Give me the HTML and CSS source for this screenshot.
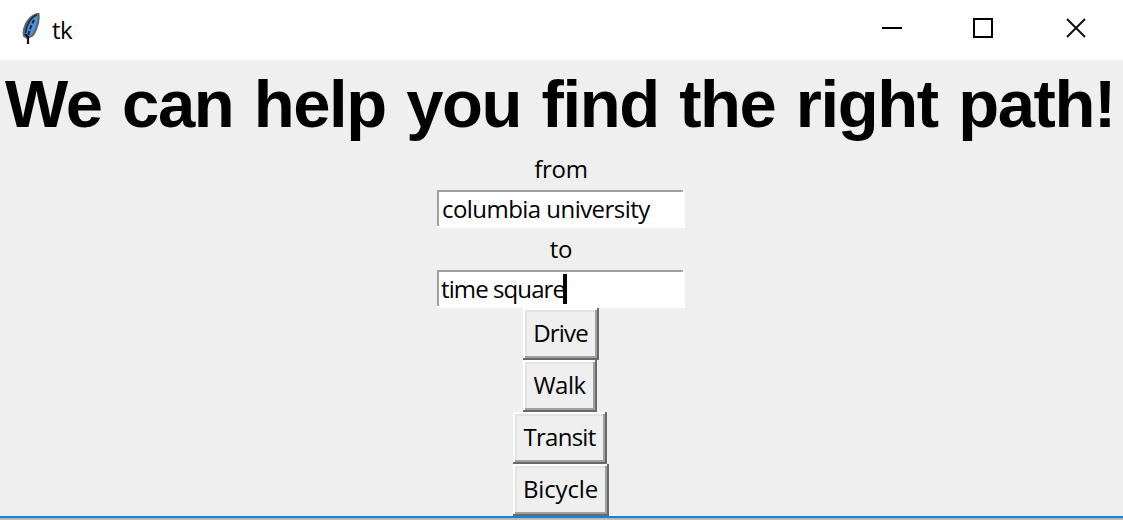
FILE: index.html
```html
<!DOCTYPE html>
<html lang="en">
<head>
<meta charset="utf-8">
<title>tk</title>
<link rel="stylesheet" href="styles.css">
</head>
<body>
<div class="window">
  <header class="titlebar">
    <svg class="feather" width="20" height="34" viewBox="0 0 20 34">
      <path d="M17.500 2C14 2 9 5 6 10C3 15 2 20 3 24L6 26L11 24C15 20 18.500 9 17.500 2Z" fill="#4c91dc" stroke="#606468" stroke-width="2"/>
      <path d="M16 3C10 5 5 13 4.500 21" fill="none" stroke="#252c33" stroke-width="1.800"/>
      <path d="M13 8C11 12 8 18 7 25" fill="none" stroke="#172330" stroke-width="2" stroke-dasharray="4 2"/>
      <path d="M4 22L7 25V32" fill="none" stroke="#161616" stroke-width="2.200"/>
    </svg>
    <span class="title">tk</span>
    <div class="controls">
      <svg width="20" height="20" viewBox="0 0 20 20"><path d="M0 10H20" stroke="#000" stroke-width="2"/></svg>
      <svg class="maximize" width="20" height="20" viewBox="0 0 20 20"><path d="M1 1H19V19H1Z" fill="none" stroke="#000" stroke-width="2"/></svg>
      <svg width="20" height="20" viewBox="0 0 20 20"><path d="M1 1L19 19M19 1L1 19" stroke="#111" stroke-width="2"/></svg>
    </div>
  </header>
  <main class="content">
    <h1 class="heading">We can help you find the right path!</h1>
    <div class="label"><span class="from">from</span></div>
    <div class="entry"><span class="origin">columbia university</span></div>
    <div class="label"><span class="to">to</span></div>
    <div class="entry last"><span class="destination">time square</span><i class="caret"></i></div>
    <button class="button drive">Drive</button>
    <button class="button walk">Walk</button>
    <button class="button transit">Transit</button>
    <button class="button bicycle">Bicycle</button>
  </main>
  <footer class="edge"></footer>
</div>
</body>
</html>
```
FILE: styles.css
```css
* { box-sizing: border-box; }
body { margin: 0; font: 24px "Open Sans", "Noto Sans", sans-serif; color: #000; }
.window { width: 1123px; height: 520px; display: flex; flex-direction: column; background: #efefef; overflow: hidden; }
.titlebar { height: 60px; flex: none; background: #fff; display: flex; align-items: flex-start; padding-left: 21px; padding-right: 37px; }
.feather { margin-top: 12px; }
.title { margin-left: 11px; line-height: 60px; letter-spacing: -0.5px; }
.controls { display: flex; gap: 72px; margin-left: auto; padding-top: 18px; }
.controls svg { display: block; }
.controls .maximize { margin: 0 1px 0 -1px; }
.content { height: 456px; flex: none; display: flex; flex-direction: column; align-items: center; padding-right: 1px; }
.heading { margin: 0 2px 0 0; height: 90px; flex: none; font: bold 67px/88px "Liberation Sans", Arial, sans-serif; letter-spacing: -1.4px; word-spacing: 3.2px; white-space: nowrap; }
.label { height: 40px; line-height: 38px; flex: none; letter-spacing: -0.2px; }
.entry { width: 248px; height: 38px; flex: none; margin-bottom: 2px; padding-left: 4px; display: flex; background: #fff; line-height: 38px; white-space: nowrap; box-shadow: inset -2px -2px #fff, inset 2px 2px #a0a0a0; }
.entry.last { margin-bottom: 0; }
.origin { letter-spacing: -0.55px; padding-left: 1px; }
.destination { letter-spacing: -0.9px; }
.caret { width: 4px; height: 30px; margin: 4px 0 0 -2px; background: #000; }
.button { height: 52px; flex: none; padding: 0 1px 2px 0; border: 0; background: #efefef; font: inherit; color: inherit; line-height: 50px; box-shadow: inset -2px -2px #696969, inset 2px 2px #fff, inset -4px -4px #a0a0a0, inset 4px 4px #e3e3e3; }
.drive { width: 76px; letter-spacing: -0.8px; }
.walk { width: 74px; margin-right: 2px; letter-spacing: -0.5px; }
.transit { width: 94px; margin-right: 2px; letter-spacing: -0.75px; }
.bicycle { width: 96px; letter-spacing: -0.15px; }
.edge { height: 4px; flex: none; background: linear-gradient(#1883d7 2px, #b4b4b4 2px, #c4c4c4); }
```
